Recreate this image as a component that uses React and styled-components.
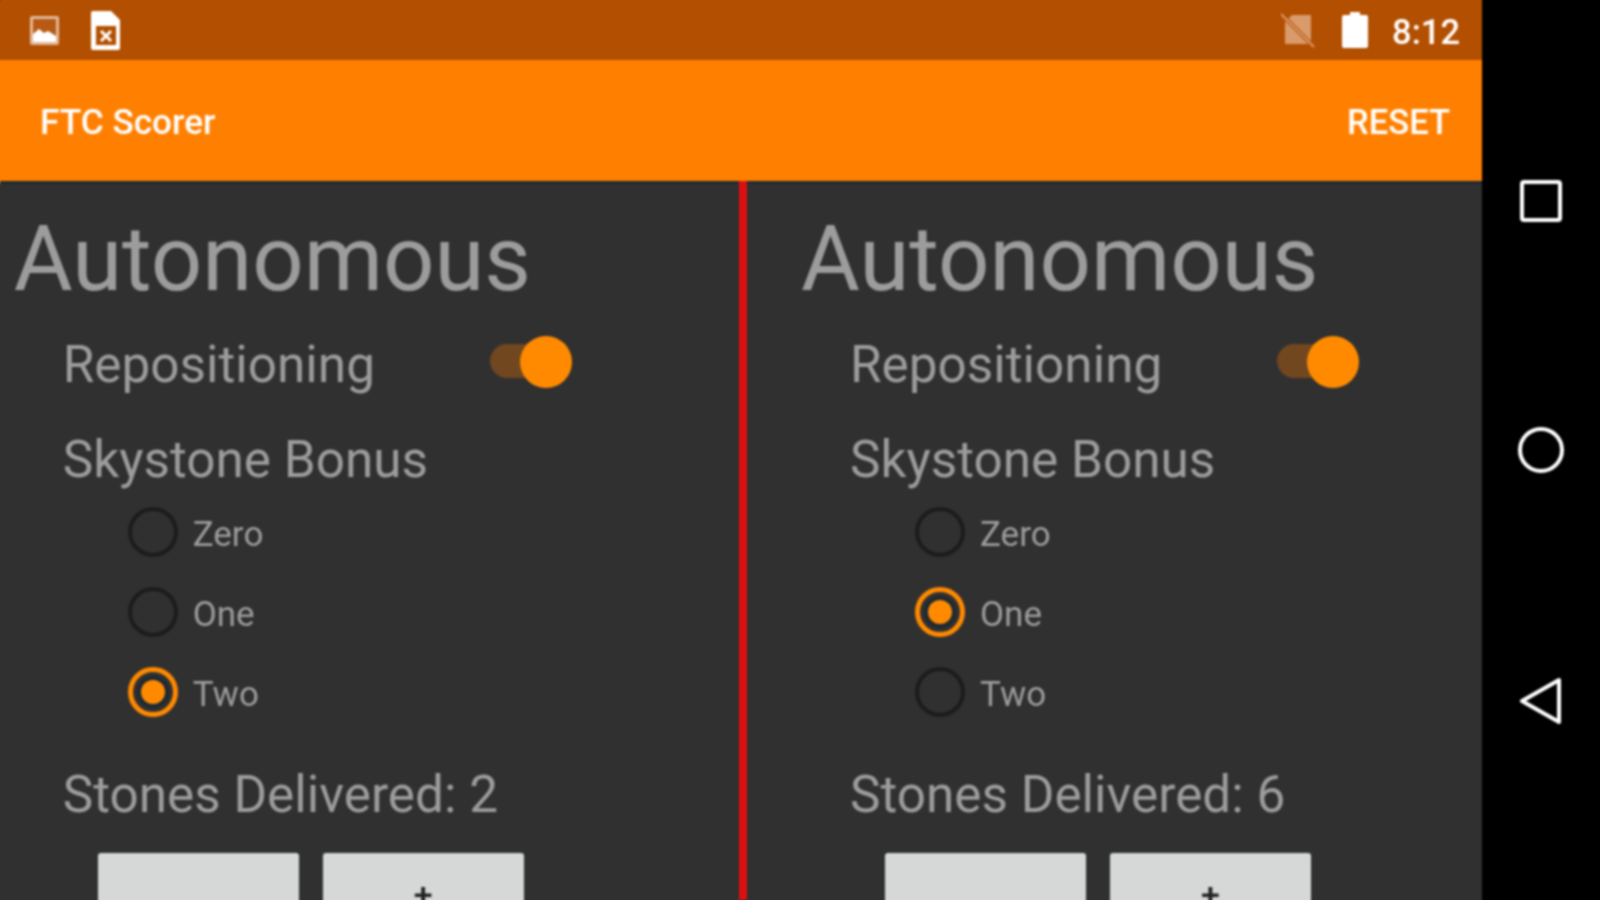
import React from "react";
import styled, { createGlobalStyle } from "styled-components";

const Global = createGlobalStyle`
  html, body { margin: 0; padding: 0; background: #000; }
  body { font-family: Roboto, "Liberation Sans", sans-serif; }
`;
const Frame = styled.div`
  width: 1600px; height: 900px; overflow: hidden;
`;
const Screen = styled.div`
  width: 1600px; height: 900px; display: flex; background: #000;
  filter: blur(0.8px);
`;
const Main = styled.div`
  width: 1482px; height: 900px; display: flex; flex-direction: column; background: #303030; flex: none;
`;
const StatusBar = styled.div`
  height: 60px; flex: none; background: #b34f00; display: flex; align-items: center;
  padding: 0 22px 0 28px; box-sizing: border-box;
  box-shadow: 0 -4px 0 #b34f00, -4px 0 0 #b34f00;
`;
const StatusGroup = styled.div`
  display: flex; align-items: center; gap: ${p => p.$gap}px;
`;
const Spacer = styled.div` flex: 1; `;
const Clock = styled.span`
  color: #fff; font-size: 34.5px; font-weight: 500; margin: 4px 0 0 24px; line-height: 60px;
`;
const AppBar = styled.div`
  height: 124px; flex: none; background: #ff8000; display: flex; align-items: center;
  justify-content: space-between; padding: 3px 32px 0 40px; box-sizing: border-box;
  border-bottom: 3px solid #1e2a33; color: #fff; font-size: 35.2px; font-weight: 500;
  box-shadow: -4px 0 0 #ff8000;
`;
const ActionText = styled.span` font-size: 34.5px; `;
const Content = styled.div`
  flex: 1; display: flex; min-height: 0; box-shadow: -4px 0 0 #303030, 0 4px 0 #303030;
`;
const Panel = styled.div`
  width: ${p => p.$width}px; flex: none; padding: 25px 0 0 ${p => p.$pad}px; box-sizing: border-box;
`;
const Divider = styled.div` width: 8px; flex: none; background: #dc1010; margin-top: -3px; `;
const Title = styled.div`
  font-size: 90.4px; line-height: 100px; color: #9c9c9c; font-weight: 400;
`;
const Body = styled.div` padding-left: 49px; `;
const SwitchRow = styled.div`
  display: flex; align-items: center; justify-content: space-between; width: 501px; height: 72px; margin-top: 20px;
`;
const Label = styled.div`
  font-size: 51.3px; line-height: 60px; color: #9c9c9c;
`;
const Track = styled.div`
  position: relative; width: 74px; height: 34px; border-radius: 17px; background: #70471f;
  margin-bottom: 8px;
`;
const Thumb = styled.div`
  position: absolute; right: -8px; top: -8px; width: 52px; height: 52px; border-radius: 50%; background: #ff8a00;
`;
const BonusLabel = styled(Label)` margin-top: 29px; `;
const Radios = styled.div` padding: 2px 0 0 65px; `;
const RadioRow = styled.div`
  display: flex; align-items: center; height: 80px; gap: 15px;
`;
const RadioMark = styled.div`
  width: 50px; height: 50px; box-sizing: border-box; border-radius: 50%; flex: none;
  border: ${p => (p.$on ? "5px solid #ff8a00" : "4px solid #1c1c1c")};
  display: flex; align-items: center; justify-content: center;
`;
const RadioDot = styled.div`
  width: 24px; height: 24px; border-radius: 50%; background: #ff8a00; box-shadow: 0 0 0 4px #1e2a33;
`;
const RadioText = styled.span` font-size: 35px; color: #9c9c9c; margin-top: 4px; `;
const StonesLabel = styled(Label)` margin-top: 33px; `;
const Buttons = styled.div`
  display: flex; gap: 24px; margin: 28px 0 0 35px;
`;
const Btn = styled.div`
  width: 201px; height: 110px; background: #d6d7d7; border-radius: 3px; text-align: center;
  font-size: 34px; line-height: 82px; color: #222; font-weight: 500;
`;
const NavBar = styled.div`
  flex: 1; display: flex; flex-direction: column; align-items: center; padding-top: 179px; color: #fff;
`;
const NavIcon = styled.svg`
  display: block; margin-bottom: ${p => p.$mb}px;
`;
const ShiftedIcon = styled.svg`
  display: block; margin-top: ${p => p.$top}px;
`;

function Side({ selected, stones, width, pad }) {
  return (
    <Panel $width={width} $pad={pad}>
      <Title>Autonomous</Title>
      <Body>
        <SwitchRow>
          <Label>Repositioning</Label>
          <Track><Thumb /></Track>
        </SwitchRow>
        <BonusLabel>Skystone Bonus</BonusLabel>
        <Radios>
          {["Zero", "One", "Two"].map(o => (
            <RadioRow key={o}>
              <RadioMark $on={o === selected}>{o === selected && <RadioDot />}</RadioMark>
              <RadioText>{o}</RadioText>
            </RadioRow>
          ))}
        </Radios>
        <StonesLabel>Stones Delivered: {stones}</StonesLabel>
        <Buttons>
          <Btn />
          <Btn>+</Btn>
        </Buttons>
      </Body>
    </Panel>
  );
}

export default function App() {
  return (
    <Frame>
      <Global />
      <Screen>
        <Main>
          <StatusBar>
            <StatusGroup $gap={28}>
              <ShiftedIcon $top={2} width="34" height="34" viewBox="0 0 34 34">
                <rect x="2" y="2" width="29" height="29" rx="2" fill="#e0b89a" />
                <rect x="5" y="5" width="23" height="23" fill="#b85a14" />
                <path d="M5 28v-8l6-5 5 4 4-2 8 5v6z" fill="#fff" />
              </ShiftedIcon>
              <ShiftedIcon $top={2} width="32" height="44" viewBox="0 0 32 44">
                <path d="M3 2h18l9 9v28a2 2 0 0 1-2 2H3a2 2 0 0 1-2-2V4a2 2 0 0 1 2-2z" fill="#fff" />
                <rect x="6" y="17" width="20" height="19" fill="#b34f00" />
                <path d="M11 22l10 10M21 22L11 32" stroke="#fff" strokeWidth="3" />
              </ShiftedIcon>
            </StatusGroup>
            <Spacer />
            <StatusGroup $gap={27}>
              <ShiftedIcon $top={2} width="34" height="38" viewBox="0 0 34 38">
                <path d="M11 3h19v29H4V10z" fill="#d99a6c" />
                <path d="M0 2l33 33" stroke="#b34f00" strokeWidth="4" />
                <path d="M0 2l33 33" stroke="#d99a6c" strokeWidth="2" />
              </ShiftedIcon>
              <ShiftedIcon $top={0} width="26" height="36" viewBox="0 0 26 36">
                <path d="M8 0h10v3h6a2 2 0 0 1 2 2v29a2 2 0 0 1-2 2H2a2 2 0 0 1-2-2V5a2 2 0 0 1 2-2h6z" fill="#fff" />
              </ShiftedIcon>
            </StatusGroup>
            <Clock>8:12</Clock>
          </StatusBar>
          <AppBar>
            <span>FTC Scorer</span>
            <ActionText>RESET</ActionText>
          </AppBar>
          <Content>
            <Side selected="Two" stones={2} width={739} pad={13.7} />
            <Divider />
            <Side selected="One" stones={6} width={735} pad={54} />
          </Content>
        </Main>
        <NavBar>
          <NavIcon $mb={203} width="44" height="44" viewBox="0 0 44 44">
            <rect x="3" y="3" width="38" height="38" rx="2" fill="none" stroke="#fff" strokeWidth="4" />
          </NavIcon>
          <NavIcon $mb={203} width="48" height="48" viewBox="0 0 48 48">
            <circle cx="24" cy="24" r="21" fill="none" stroke="#fff" strokeWidth="4" />
          </NavIcon>
          <NavIcon $mb={0} width="44" height="48" viewBox="0 0 44 48">
            <path d="M3 24L40 3v42z" fill="none" stroke="#fff" strokeWidth="4" strokeLinejoin="round" />
          </NavIcon>
        </NavBar>
      </Screen>
    </Frame>
  );
}
